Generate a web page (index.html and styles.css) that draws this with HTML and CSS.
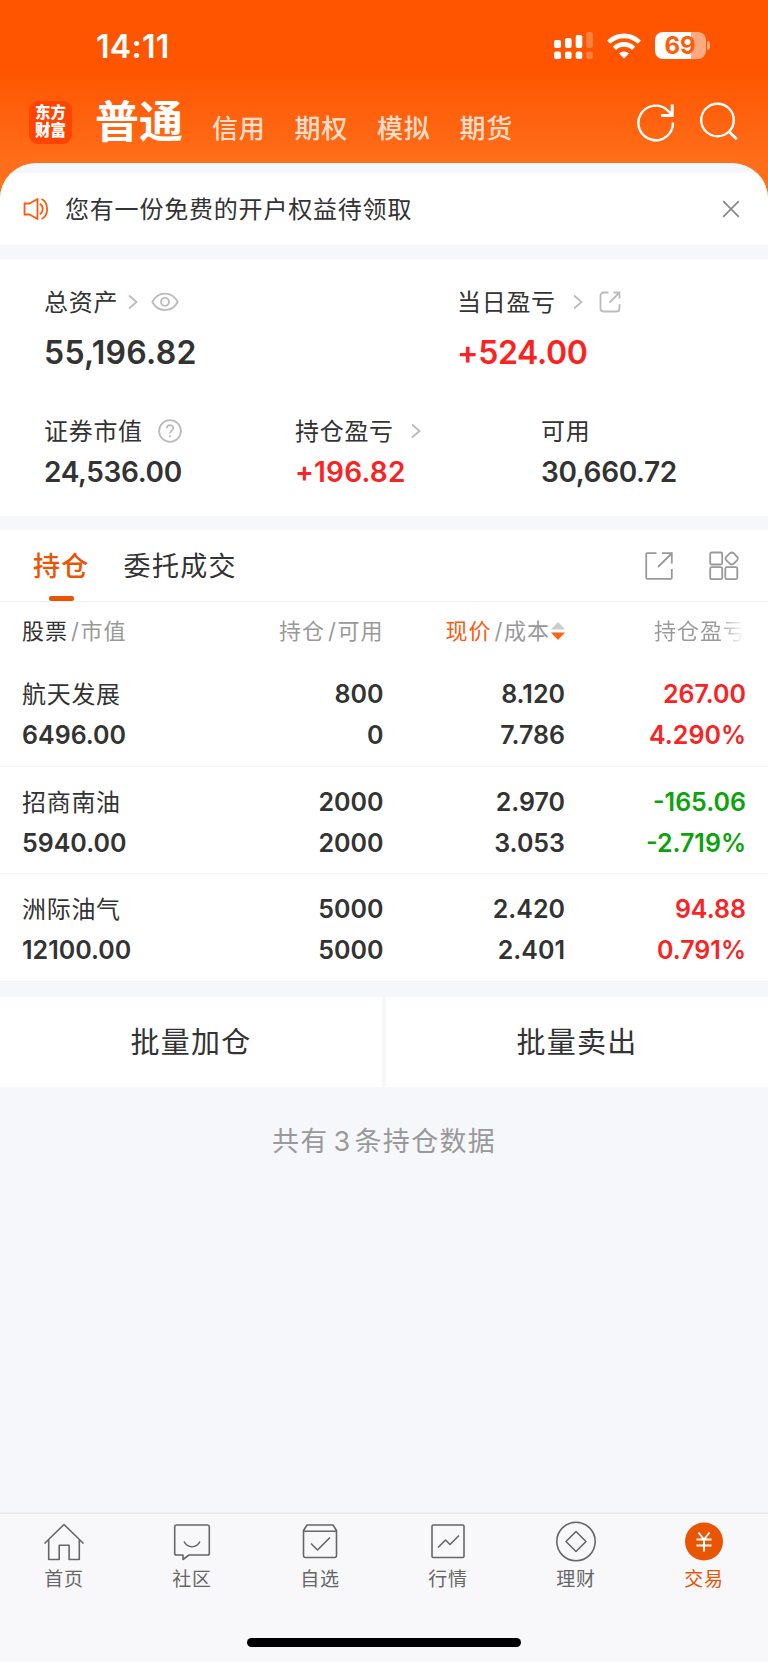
FILE: index.html
```html
<!DOCTYPE html>
<html lang="zh-CN">
<head>
    <meta charset="UTF-8">
    <meta name="viewport" content="width=device-width, initial-scale=1.0">
    <title>交易</title>
    <link rel="stylesheet" href="styles.css">
</head>
<body>
    <div class="header">
        <div class="status-bar">
            <div class="time">14:11</div>
            <div class="status-icons">
                <svg class="signal" width="39" height="27" viewBox="0 0 39 27" fill="#fff">
                    <rect x="0" y="8" width="7" height="8" rx="2"/>
                    <rect x="11" y="6" width="6.6" height="10" rx="2"/>
                    <rect x="21.7" y="3" width="6.6" height="13" rx="2"/>
                    <rect x="0" y="19.5" width="7" height="7.5" rx="2"/>
                    <rect x="11" y="19.5" width="6.6" height="7.5" rx="2"/>
                    <rect x="21.7" y="19.5" width="6.6" height="7.5" rx="2"/>
                    <g opacity=".25">
                        <rect x="32.3" y="0" width="6.6" height="16" rx="2"/>
                        <rect x="32.3" y="19.5" width="6.6" height="7.5" rx="2"/>
                    </g>
                </svg>
                <svg class="wifi" width="34" height="26" viewBox="0 0 34 26">
                    <g fill="none" stroke="#fff" stroke-width="4.6">
                        <path d="M1.6 9.2a22 22 0 0 1 30.8 0"/>
                        <path d="M7.4 15.3a13.8 13.8 0 0 1 19.2 0"/>
                    </g>
                    <path d="M17 25.5l-5-5a7.2 7.2 0 0 1 10 0z" fill="#fff"/>
                </svg>
                <div class="battery"><span>69</span></div>
                <div class="battery-cap"></div>
            </div>
        </div>
        <div class="nav">
            <div class="logo"><span>东方</span><span>财富</span></div>
            <div class="nav-active">普通</div>
            <div class="nav-item">信用</div>
            <div class="nav-item">期权</div>
            <div class="nav-item">模拟</div>
            <div class="nav-item">期货</div>
            <div class="nav-icons">
                <svg width="38" height="40" viewBox="0 0 38 40" fill="none" stroke="#fff" stroke-width="2.4">
                    <path d="M36 20.500a17.300 17.300 0 1 1-5.500-12.200l4 3.700"/>
                    <path d="M35.200 2.500v11H24.200" stroke-width="3"/>
                </svg>
                <svg width="38" height="40" viewBox="0 0 38 40" fill="none" stroke="#fff" stroke-width="2.4">
                    <circle cx="17.5" cy="18" r="16.3"/>
                    <path d="M28.8 29.5l8 7.8" stroke-width="2.8"/>
                </svg>
            </div>
        </div>
    </div>

    <div class="sheet">
        <div class="notice">
            <svg width="26" height="24" viewBox="0 0 26 24" fill="none" stroke="#fa5b0f" stroke-width="1.8" stroke-linejoin="round">
                <path d="M1.5 6.5h5L14.5 2v20l-8-4.5h-5z"/>
                <path d="M16.800 6.800c3.800 2 3.800 8.400 0 10.400M18.500 2c7.500 3.500 7.500 16.500 0 20"/>
            </svg>
            <span class="notice-text">您有一份免费的开户权益待领取</span>
            <svg class="close" width="18" height="18" viewBox="0 0 18 18" fill="none" stroke="#888" stroke-width="1.7">
                <path d="M1.2 1.2l15.6 15.6M16.8 1.2L1.2 16.8"/>
            </svg>
        </div>

        <div class="assets">
            <div class="assets-top">
                <div class="asset">
                    <div class="label"><span>总资产</span>
                        <svg class="arrow" width="10" height="16" viewBox="0 0 10 16"><path d="M1 1.5l7.500 6.500L1 14.500"/></svg>
                        <svg class="eye" width="28" height="20" viewBox="0 0 28 20"><path d="M1.300 10C7-1.200 21-1.200 26.700 10 21 20.700 7 20.700 1.300 10z"/><circle cx="14" cy="9.800" r="4"/></svg>
                    </div>
                    <div class="value big total">55,196.82</div>
                </div>
                <div class="asset">
                    <div class="label"><span>当日盈亏</span>
                        <svg class="arrow far" width="10" height="16" viewBox="0 0 10 16"><path d="M1 1.5l7.500 6.500L1 14.500"/></svg>
                        <svg class="share" width="22" height="22" viewBox="0 0 22 22"><path d="M9.500 1.500H4.500a3 3 0 0 0-3 3v13a3 3 0 0 0 3 3h13a3 3 0 0 0 3-3v-4.500M14.500 1.500h6v6M20 2L10.500 11.500"/></svg>
                    </div>
                    <div class="value big red">+524.00</div>
                </div>
            </div>
            <div class="assets-bottom">
                <div class="asset">
                    <div class="label"><span>证券市值</span>
                        <svg class="help" width="24" height="24" viewBox="0 0 24 24"><circle cx="12" cy="12" r="10.900"/><path d="M8.900 9.300c0-4.200 6.300-4 6.300-.2 0 2.600-3.200 2.500-3.200 5.500M12 16.300v2"/></svg>
                    </div>
                    <div class="value">24,536.00</div>
                </div>
                <div class="asset">
                    <div class="label"><span>持仓盈亏</span>
                        <svg class="arrow far" width="10" height="16" viewBox="0 0 10 16"><path d="M1 1.5l7.500 6.500L1 14.500"/></svg>
                    </div>
                    <div class="value red profit">+196.82</div>
                </div>
                <div class="asset">
                    <div class="label"><span>可用</span></div>
                    <div class="value">30,660.72</div>
                </div>
            </div>
        </div>

        <div class="tabs">
            <div class="tab active">持仓</div>
            <div class="tab">委托成交</div>
            <div class="tab-icons">
                <svg width="28" height="28" viewBox="0 0 28 28" fill="none" stroke="#999" stroke-width="1.8">
                    <path d="M11.5 1.2H2.200a1 1 0 0 0-1 1v23.600a1 1 0 0 0 1 1h23.600a1 1 0 0 0 1-1V17M17 1.200h9.800V11.500M26.500 1.500L13 15"/>
                </svg>
                <svg width="30" height="30" viewBox="0 0 30 30" fill="none" stroke="#999" stroke-width="1.8">
                    <rect x="1.200" y="1.500" width="12" height="12" rx="1.500"/>
                    <rect x="1.200" y="16.200" width="12" height="12" rx="1.500"/>
                    <rect x="16.300" y="16.200" width="12" height="12" rx="1.500"/>
                    <path d="M21 2.200q1.800-1.500 3.600 0l3.600 3.700q1.300 1.600 0 3.200l-3.600 3.700q-1.800 1.500-3.600 0L17.200 9.100q-1.300-1.600 0-3.200z"/>
                </svg>
            </div>
        </div>

        <div class="table">
            <div class="table-head">
                <div><span class="dark">股票</span><i>/</i>市值</div>
                <div>持仓<i>/</i>可用</div>
                <div class="sort"><span class="orange">现价</span><i>/</i>成本
                    <svg width="14" height="20" viewBox="0 0 14 20"><path d="M0 8.500L7 1l7 7.500z" fill="#ccc"/><path d="M0 11.500h14L7 19z" fill="#fa6414"/></svg>
                </div>
                <div><span class="fade">持仓盈亏</span></div>
            </div>
            <div class="row">
                <div><p class="name">航天发展</p><p>6496.00</p></div>
                <div><p>800</p><p>0</p></div>
                <div><p>8.120</p><p>7.786</p></div>
                <div class="red"><p>267.00</p><p>4.290%</p></div>
            </div>
            <div class="row">
                <div><p class="name">招商南油</p><p>5940.00</p></div>
                <div><p>2000</p><p>2000</p></div>
                <div><p>2.970</p><p>3.053</p></div>
                <div class="green"><p>-165.06</p><p>-2.719%</p></div>
            </div>
            <div class="row">
                <div><p class="name">洲际油气</p><p>12100.00</p></div>
                <div><p>5000</p><p>5000</p></div>
                <div><p>2.420</p><p>2.401</p></div>
                <div class="red"><p>94.88</p><p>0.791%</p></div>
            </div>
        </div>

        <div class="batch">
            <div class="batch-button">批量加仓</div>
            <div class="batch-button">批量卖出</div>
        </div>
        <div class="summary">共有<span>3</span>条持仓数据</div>
    </div>

    <div class="tab-bar">
        <div class="bar-item">
            <svg width="42" height="42" viewBox="0 0 42 42"><path d="M1.500 22.500L21 3.500l19.500 19M5.700 19v19.500h10.500V24.300h9.900v14.200h10.200V19"/></svg>
            <span>首页</span>
        </div>
        <div class="bar-item">
            <svg width="42" height="42" viewBox="0 0 42 42"><path d="M5.500 4h31a1.800 1.800 0 0 1 1.800 1.800v26.400a1.800 1.800 0 0 1-1.800 1.800H18l-6 4.500V34H5.500a1.800 1.800 0 0 1-1.800-1.800V5.800A1.800 1.800 0 0 1 5.500 4zM13 20.500c3.500 7 12.500 7 16 0"/></svg>
            <span>社区</span>
        </div>
        <div class="bar-item">
            <svg width="42" height="42" viewBox="0 0 42 42"><path d="M8 4h26l3.500 5.500v25a2 2 0 0 1-2 2h-29a2 2 0 0 1-2-2v-25zM4.500 10.300h33M12 22.500l6.500 6.500L31 16.500"/></svg>
            <span>自选</span>
        </div>
        <div class="bar-item">
            <svg width="42" height="42" viewBox="0 0 42 42"><rect x="5" y="4" width="32" height="32.500" rx="1.200"/><path d="M11 26.500l7.500-7.500 4.500 4.500L32 14.500"/></svg>
            <span>行情</span>
        </div>
        <div class="bar-item">
            <svg width="42" height="42" viewBox="0 0 42 42"><circle cx="21" cy="20.500" r="19.200"/><path d="M21 10.500l10 10-10 10-10-10z"/></svg>
            <span>理财</span>
        </div>
        <div class="bar-item current">
            <svg width="42" height="42" viewBox="0 0 42 42"><circle cx="21" cy="20.500" r="19"/><path class="yen" d="M15.500 11.500l5.500 7 5.500-7M13.500 18.500h15M13.500 24.500h15M21 18.500v12"/></svg>
            <span>交易</span>
        </div>
        <div class="home-indicator"></div>
    </div>
</body>
</html>
```
FILE: styles.css
```css
* {
    box-sizing: border-box;
}
body {
    display: flex;
    flex-direction: column;
    height: 1662px;
    margin: 0;
    background: linear-gradient(#ff5500 70px, #ff6e1a 163px, #ff731f 210px);
    color: #333;
    font-family: Inter, "Noto Sans CJK SC", sans-serif;
    overflow: hidden;
}
p {
    margin: 0;
}
svg {
    flex: none;
}

/* 顶部 */
.header {
    height: 163px;
    flex: none;
    color: #fff;
}
.status-bar {
    display: flex;
    justify-content: space-between;
    height: 91px;
    padding: 0 58px 0 96px;
}
.time {
    font-size: 32px;
    font-weight: 600;
    line-height: 94px;
    letter-spacing: 0.3px;
}
.status-icons {
    display: flex;
    align-items: center;
}
.wifi {
    margin: 0 13.5px 0 14px;
}
.battery {
    width: 51px;
    height: 27px;
    border-radius: 8px;
    background: linear-gradient(90deg, #fff 36px, rgba(255, 255, 255, 0.5) 36px);
    color: #ff5b08;
    font-size: 24px;
    font-weight: 700;
    line-height: 27px;
    text-align: center;
}
.battery-cap {
    width: 3px;
    height: 9px;
    margin-left: 1.5px;
    border-radius: 0 4px 4px 0;
    background: rgba(255, 255, 255, 0.5);
}
.nav {
    display: flex;
    height: 62px;
    align-items: center;
    padding: 0 30px 0 29px;
}
.logo {
    display: flex;
    flex-direction: column;
    justify-content: center;
    width: 43px;
    height: 43px;
    border-radius: 9px;
    background: #ff4400;
    font-size: 15.5px;
    font-weight: 900;
    line-height: 18px;
    text-align: center;
}
.nav-active {
    width: 117px;
    margin-left: 23px;
    font-size: 44px;
    font-weight: 700;
    line-height: 62px;
}
.nav-item {
    width: 82.5px;
    padding-top: 13px;
    color: rgba(255, 255, 255, 0.8);
    font-size: 26px;
    font-weight: 500;
    line-height: 36px;
    letter-spacing: 0.8px;
}
.nav-icons {
    display: flex;
    gap: 25px;
    margin-left: auto;
}

/* 内容 */
.sheet {
    flex: 1;
    padding-top: 10px;
    border-radius: 36px 36px 0 0;
    background: #f6f7fa;
    overflow: hidden;
}
.notice {
    display: flex;
    align-items: center;
    height: 72px;
    padding: 0 28px 0 23px;
    background: #fff;
}
.notice-text {
    margin-left: 16px;
    padding-bottom: 4px;
    font-size: 24px;
    letter-spacing: 0.8px;
}
.close {
    margin-left: auto;
}
.assets {
    height: 257px;
    margin-top: 14px;
    padding: 25px 44px 0;
    background: #fff;
}
.assets-top {
    display: grid;
    grid-template-columns: 413px 1fr;
    height: 129px;
}
.assets-bottom {
    display: grid;
    grid-template-columns: 251px 246px 1fr;
}
.label {
    display: flex;
    align-items: center;
    height: 36px;
    font-size: 24px;
    letter-spacing: 0.7px;
}
.label span {
    padding-bottom: 4px;
}
.label svg {
    fill: none;
    stroke: #bbb;
    stroke-width: 1.8;
}
.label .arrow {
    margin-left: 10px;
}
.label .arrow.far {
    margin-left: 17px;
}
.label .eye {
    margin-left: 13px;
}
.label .share {
    margin-left: 16px;
}
.label .help {
    margin-left: 15px;
}
.value {
    font-size: 28px;
    font-weight: 600;
    line-height: 46px;
    letter-spacing: -0.35px;
}
.value.profit {
    letter-spacing: 0.2px;
}
.value.big {
    font-size: 32px;
    line-height: 66px;
}
.value.total {
    letter-spacing: 0.3px;
}
.red {
    color: #fa2323;
}
.green {
    color: #0ba30b;
}
.tabs {
    display: flex;
    align-items: center;
    height: 72px;
    margin-top: 14px;
    padding: 0 29px 0 33px;
    border-bottom: 1px solid #f0f0f0;
    background: #fff;
}
.tab {
    position: relative;
    margin-right: 34px;
    padding-top: 2px;
    font-size: 27px;
    line-height: 69px;
    letter-spacing: 1.3px;
}
.tab.active {
    color: #ea5504;
    font-weight: 500;
}
.tab.active::after {
    content: "";
    position: absolute;
    bottom: 0;
    left: 16px;
    width: 25px;
    height: 5px;
    border-radius: 2px;
    background: #ea5504;
}
.tab-icons {
    display: flex;
    align-items: center;
    gap: 36px;
    margin-left: auto;
}

/* 持仓列表 */
.table {
    background: #fff;
}
.table-head,
.row {
    display: grid;
    grid-template-columns: 180px 181.5px 181.5px 181px;
    padding: 0 22px;
    text-align: right;
}
.table-head {
    height: 57px;
    color: #999;
    font-size: 22px;
    line-height: 58px;
    letter-spacing: 1px;
}
.table-head i {
    margin: 0 0.5px 0 3px;
    font-style: normal;
}
.table-head div:first-child,
.row div:first-child {
    text-align: left;
}
.dark {
    color: #333;
}
.orange {
    color: #fa5b0f;
}
.sort {
    display: flex;
    align-items: center;
    justify-content: flex-end;
}
.sort svg {
    margin-left: 1px;
}
.fade {
    background: linear-gradient(90deg, #999 70%, #fff 98%);
    -webkit-background-clip: text;
    background-clip: text;
    color: transparent;
}
.row {
    height: 107.5px;
    padding-top: 15px;
    border-bottom: 1px solid #f2f2f4;
    font-size: 25px;
    font-weight: 600;
    line-height: 41px;
}
.row .name {
    font-size: 24px;
    font-weight: 400;
    letter-spacing: 0.7px;
}
.batch {
    display: grid;
    grid-template-columns: 1fr 1fr;
    gap: 4px;
    margin-top: 15px;
}
.batch-button {
    padding-top: 2px;
    background: #fff;
    font-size: 29px;
    line-height: 88px;
    letter-spacing: 1.2px;
    text-align: center;
}
.summary {
    color: #999;
    font-size: 27px;
    line-height: 110px;
    letter-spacing: 1.3px;
    text-align: center;
}
.summary span {
    margin: 0 3px 0 5px;
}

/* 底部导航 */
.tab-bar {
    display: flex;
    position: relative;
    flex: none;
    height: 150px;
    border-top: 2px solid #ececee;
    background: #f8f8fb;
}
.bar-item {
    display: flex;
    flex: 1;
    flex-direction: column;
    align-items: center;
    padding-top: 7px;
    color: #666;
    font-size: 19px;
    line-height: 34px;
    letter-spacing: 0.8px;
}
.bar-item svg {
    fill: none;
    stroke: #666;
    stroke-width: 1.6;
    stroke-linejoin: round;
}
.bar-item.current {
    color: #ea5504;
}
.bar-item.current circle {
    fill: #ea5504;
    stroke: none;
}
.bar-item .yen {
    stroke: #fff;
    stroke-width: 2;
}
.home-indicator {
    position: absolute;
    bottom: 15px;
    left: 247px;
    width: 274px;
    height: 9px;
    border-radius: 5px;
    background: #000;
}
```
